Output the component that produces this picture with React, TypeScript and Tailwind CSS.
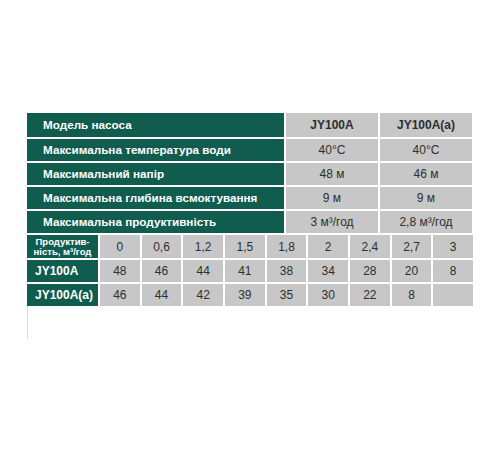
import React from 'react';

const specs = [
  { label: 'Максимальна температура води', a: '40°C', b: '40°C' },
  { label: 'Максимальний напір', a: '48 м', b: '46 м' },
  { label: 'Максимальна глибина всмоктування', a: '9 м', b: '9 м' },
  { label: 'Максимальна продуктивність', a: '3 м³/год', b: '2,8 м³/год' },
];

const flow = ['0', '0,6', '1,2', '1,5', '1,8', '2', '2,4', '2,7', '3'];
const curves = [
  { name: 'JY100A', values: ['48', '46', '44', '41', '38', '34', '28', '20', '8'] },
  { name: 'JY100A(a)', values: ['46', '44', '42', '39', '35', '30', '22', '8', ''] },
];

const green = 'bg-[#105c4f] text-white font-bold';
const grey = 'bg-[#c7c7c7] text-[#2e2e2e] flex items-center justify-center';

const App: React.FC = () => {
  return (
    <div className="w-[500px] h-[450px] bg-white pt-[113px] pl-[27px] font-['Liberation_Sans',Arial,sans-serif] text-[12px]">
      <div className="w-[446px] flex flex-col gap-[2px]">
        {/* Model summary */}
        <div className="grid grid-cols-[257px_92px_92px] gap-[2px]">
          <div className={`${green} h-[24px] flex items-center pl-[16px] text-[11.7px]`}>Модель насоса</div>
          <div className={`${grey} font-bold`}>JY100A</div>
          <div className={`${grey} font-bold`}>JY100A(a)</div>
          {specs.map((s) => (
            <React.Fragment key={s.label}>
              <div className={`${green} h-[22px] flex items-center pl-[16px] text-[11.7px]`}>{s.label}</div>
              <div className={grey}>{s.a}</div>
              <div className={grey}>{s.b}</div>
            </React.Fragment>
          ))}
        </div>

        {/* Head / flow table */}
        <div className="grid grid-cols-[71px_repeat(9,1fr)] gap-[2px]">
          <div className={`${green} h-[23px] flex flex-col items-center justify-center text-[9.5px] leading-[10px]`}>
            <span>Продуктив-</span>
            <span>ність, м³/год</span>
          </div>
          {flow.map((f) => (
            <div key={f} className={grey}>{f}</div>
          ))}
          {curves.map((c) => (
            <React.Fragment key={c.name}>
              <div className={`${green} h-[22px] flex items-center pl-[8px]`}>{c.name}</div>
              {c.values.map((v, i) => (
                <div key={i} className={grey}>{v}</div>
              ))}
            </React.Fragment>
          ))}
        </div>
      </div>
      <div className="w-px h-[33px] bg-[#d9d9d9]" />
    </div>
  );
};

export default App;
